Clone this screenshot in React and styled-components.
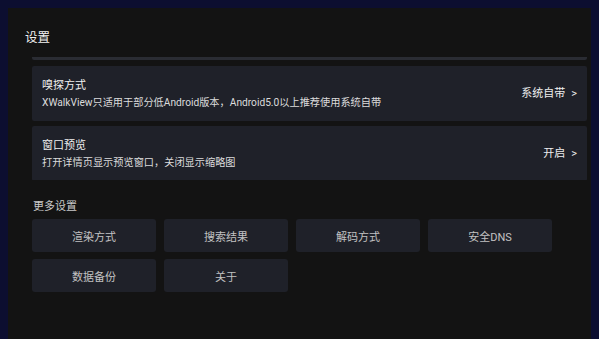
import React from "react";
import styled, { createGlobalStyle } from "styled-components";

const GlobalStyle = createGlobalStyle`
  * {
    box-sizing: border-box;
  }
  html,
  body {
    margin: 0;
    padding: 0;
    background: #0c0e30;
  }
  body {
    font-family: Roboto, "Noto Sans CJK SC", sans-serif;
  }
`;

const Panel = styled.div`
  margin: 8px 8px 0 8px;
  height: 331px;
  background: #131313;
  padding: 0 4px 0 17px;
  display: flex;
  flex-direction: column;
  overflow: hidden;
`;

const Title = styled.h1`
  margin: 0;
  padding: 22px 0 0;
  height: 49px;
  font-size: 12.5px;
  font-weight: 400;
  line-height: 16px;
  color: #f2f2f2;
`;

/* the list is scrolled a bit: only the bottom edge of the card above shows */
const Scroller = styled.div`
  height: 123px;
  margin-left: 7px;
  overflow: hidden;

  &::before {
    content: "";
    display: block;
    height: 3px;
    margin-bottom: 6px;
    background: #2a2c33;
    border-radius: 0 0 2px 2px;
  }
`;

const List = styled.ul`
  list-style: none;
  margin: 0;
  padding: 0;
  display: flex;
  flex-direction: column;
  gap: 5px;
`;

const Card = styled.li`
  height: 55px;
  background: #1f2129;
  border-radius: 2px;
  padding: 0 10px;
  display: flex;
  align-items: center;
  justify-content: space-between;
`;

const Info = styled.div`
  display: flex;
  flex-direction: column;
  gap: 1px;
`;

const CardName = styled.p`
  margin: 0;
  font-size: 11px;
  line-height: 16px;
  color: #f0f0f0;
`;

const CardDesc = styled.p`
  margin: 0;
  font-size: 10.2px;
  line-height: 15px;
  color: #dcdcdc;
`;

const Value = styled.span`
  font-size: 11px;
  line-height: 16px;
  color: #eeeeee;
  white-space: nowrap;

  &::after {
    content: ">";
    margin-left: 6px;
  }
`;

const SectionTitle = styled.h2`
  margin: 0;
  padding: 20px 0 0 8px;
  height: 39px;
  font-size: 11px;
  font-weight: 400;
  line-height: 14px;
  color: #c9c9c9;
`;

const Grid = styled.div`
  margin-left: 7px;
  display: grid;
  grid-template-columns: repeat(4, 124px);
  grid-auto-rows: 33px;
  column-gap: 8px;
  row-gap: 7px;
`;

const Tile = styled.button`
  border: none;
  border-radius: 3px;
  background: #1f2129;
  color: #c2c2c2;
  font-family: inherit;
  font-size: 11px;
  padding: 0;
  cursor: pointer;
`;

const items = [
  {
    name: "嗅探方式",
    desc: "XWalkView只适用于部分低Android版本，Android5.0以上推荐使用系统自带",
    value: "系统自带",
  },
  {
    name: "窗口预览",
    desc: "打开详情页显示预览窗口，关闭显示缩略图",
    value: "开启",
  },
];

const more = ["渲染方式", "搜索结果", "解码方式", "安全DNS", "数据备份", "关于"];

const App = () => {
  return (
    <>
      <GlobalStyle />
      <Panel>
        <Title>设置</Title>
        <Scroller>
          <List>
            {items.map((obj) => (
              <Card key={obj.name}>
                <Info>
                  <CardName>{obj.name}</CardName>
                  <CardDesc>{obj.desc}</CardDesc>
                </Info>
                <Value>{obj.value}</Value>
              </Card>
            ))}
          </List>
        </Scroller>
        <SectionTitle>更多设置</SectionTitle>
        <Grid>
          {more.map((label) => (
            <Tile key={label}>{label}</Tile>
          ))}
        </Grid>
      </Panel>
    </>
  );
};

export default App;
